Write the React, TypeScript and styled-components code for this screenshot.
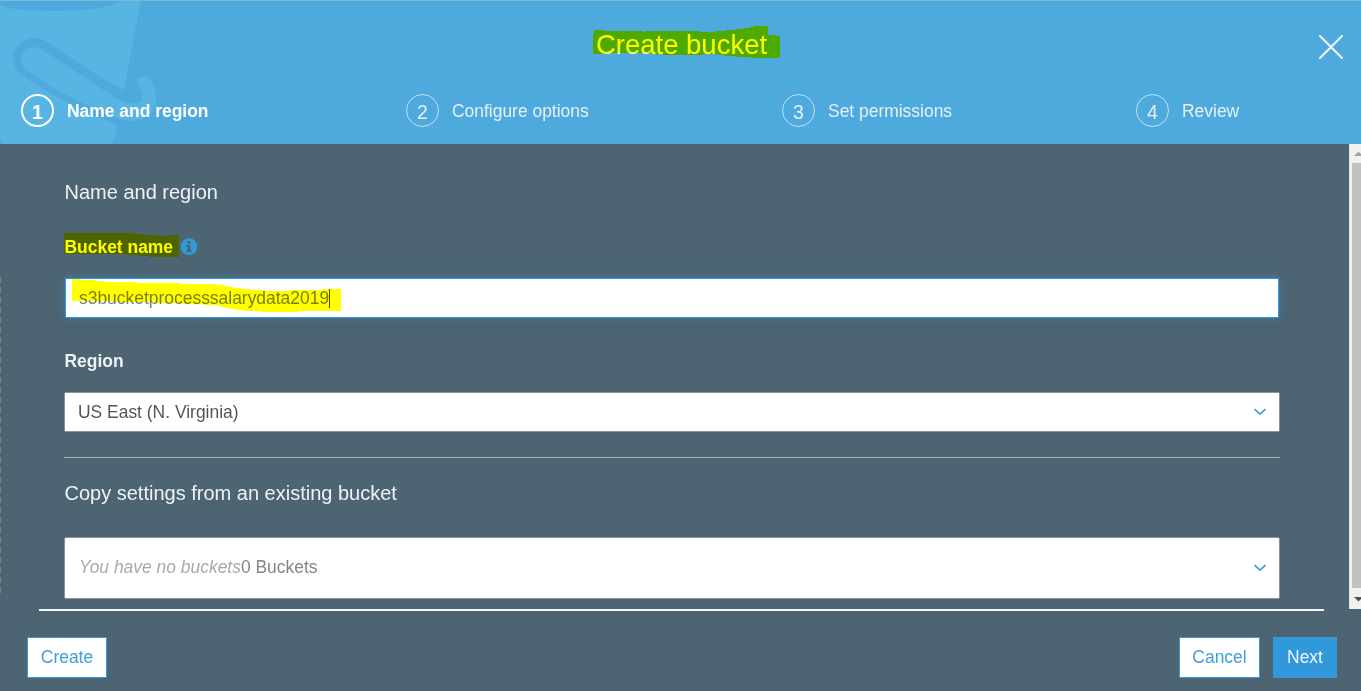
import React from 'react';
import styled, { createGlobalStyle, css } from 'styled-components';

const GlobalStyle = createGlobalStyle`
  *, *::before, *::after { box-sizing: border-box; }
  html, body { margin: 0; padding: 0; overflow: hidden; }
  body {
    font-family: "Liberation Sans", Arial, sans-serif;
    font-size: 17.45px;
    line-height: 20px;
    background: #4d6472;
  }
  button { font: inherit; cursor: pointer; }
`;

const Dialog = styled.div`
  position: relative;
  display: flex;
  flex-direction: column;
  width: 1361px;
  height: 691px;
  background: #4d6472;
  color: #eef2f4;
`;

const Header = styled.header`
  position: relative;
  display: flex;
  flex-direction: column;
  height: 144px;
  background: #4ea9dd;
  border-top: 1px solid #80b9d3;
  overflow: hidden;
`;

const BucketArt = styled.svg`
  position: absolute;
  left: 0;
  top: -1px;
`;

const TitleRow = styled.div`
  position: relative;
  display: grid;
  grid-template-columns: 60px 1fr 60px;
  align-items: center;
  height: 88px;
`;

const Title = styled.h1`
  grid-column: 2;
  margin: 0;
  padding-left: 2px;
  font-size: 27.5px;
  font-weight: 400;
  line-height: 32px;
  text-align: center;
  color: #fff;
`;

const CloseButton = styled.button`
  display: flex;
  padding: 3px 0 0 16.5px;
  border: 0;
  background: none;
`;

const Steps = styled.ol`
  position: relative;
  display: grid;
  grid-template-columns: 385px 376px 354px 1fr;
  margin: 0;
  padding: 5px 0 0 21px;
  list-style: none;
`;

const Step = styled.li<{ $active?: boolean }>`
  display: flex;
  align-items: center;
  gap: 13px;
  color: ${p => (p.$active ? '#fff' : '#e3f1fa')};
  font-weight: ${p => (p.$active ? 700 : 400)};
`;

const StepNumber = styled.span<{ $active?: boolean }>`
  display: flex;
  align-items: center;
  justify-content: center;
  width: 33px;
  height: 33px;
  border: ${p => (p.$active ? '2px solid #fff' : '1.5px solid #c4e1f3')};
  border-radius: 50%;
  font-size: 19.5px;
  padding-top: 2px;
`;

const StepName = styled.span`
  padding-top: 1px;
`;

const Main = styled.div`
  display: flex;
  height: 465px;
`;

const Form = styled.main`
  flex: 1;
  padding: 36px 69px 0 64px;
`;

const SectionTitle = styled.h2`
  margin: 0;
  padding-left: 0.5px;
  font-size: 20px;
  font-weight: 400;
  line-height: 24px;
`;

const Label = styled.label<{ $top: number; $height: number; $bright?: boolean }>`
  display: flex;
  align-items: flex-start;
  gap: 7px;
  margin-top: ${p => p.$top}px;
  padding-left: 0.5px;
  height: ${p => p.$height}px;
  font-weight: 700;
  ${p => p.$bright && css`color: #fff;`}
`;

const Field = styled.div<{ $height: number; $focused?: boolean }>`
  display: flex;
  align-items: center;
  justify-content: space-between;
  width: 1216px;
  height: ${p => p.$height}px;
  padding: 0 12px 0 13px;
  border: 1px solid #8c9499;
  border-radius: 2px;
  background: #fff;
  color: #555;
  ${p =>
    p.$focused &&
    css`
      width: 1214px;
      margin-left: 1px;
      border-color: #2f98da;
      border-radius: 1px;
      box-shadow: 0 0 7px rgba(50, 150, 220, 0.55);
      color: #7d7d7d;
    `}
`;

const FieldText = styled.span<{ $up?: number; $left?: number }>`
  display: flex;
  align-items: center;
  padding-bottom: ${p => p.$up ?? 0}px;
  padding-left: ${p => p.$left ?? 0}px;
`;

const Muted = styled.em`
  color: #a6aaaa;
`;

const Count = styled.span`
  color: #858585;
`;

const Caret = styled.span`
  width: 1px;
  height: 19px;
  background: #444;
`;

const Divider = styled.hr`
  width: 1216px;
  height: 1px;
  margin: 25px 0 23px;
  border: 0;
  background: #a9b4ba;
`;

const CopySection = styled.section`
  display: flex;
  flex-direction: column;
  gap: 32px;
`;

const Scrollbar = styled.div`
  display: flex;
  flex-direction: column;
  width: 12px;
  border-left: 1px solid #e2e4e5;
  background: #f1f1f1;
  overflow: hidden;
`;

const ScrollArrow = styled.svg`
  flex: none;
  display: block;
`;

const Thumb = styled.div`
  flex: 1;
  margin-left: 2px;
  background: #c1c1c1;
`;

const Footer = styled.footer`
  display: flex;
  flex-direction: column;
  height: 82px;
`;

const FooterRule = styled.div`
  height: 2px;
  margin: 0 37px 0 39px;
  background: #f5f8f9;
`;

const Actions = styled.div`
  display: flex;
  gap: 13px;
  padding: 26px 24px 0 27px;
`;

const Button = styled.button<{ $primary?: boolean; $width: number; $first?: boolean }>`
  width: ${p => p.$width}px;
  height: 41px;
  padding: 0 0 2px;
  border: 1px solid #3599d9;
  background: ${p => (p.$primary ? '#3199d9' : '#fff')};
  color: ${p => (p.$primary ? '#eef7fc' : '#3d9fdb')};
  margin-right: ${p => (p.$first ? 'auto' : '0')};
`;

const EdgeDashes = styled.div`
  position: absolute;
  left: 0;
  top: 277px;
  width: 1px;
  height: 316px;
  background: repeating-linear-gradient(to bottom, #86807a 0 6px, transparent 6px 10px);
`;

const Marker = styled.svg`
  position: absolute;
  left: 0;
  top: 0;
  pointer-events: none;
  mix-blend-mode: multiply;
`;

const Chevron = () => (
  <svg width="14" height="10" viewBox="0 0 14 10" fill="none">
    <path d="M1.5 2.2L7 7.1L12.5 2.2" stroke="#3d9fdb" strokeWidth="1.7" />
  </svg>
);

const InfoIcon = () => (
  <svg width="18" height="19" viewBox="0 -0.7 18 19">
    <circle cx="9" cy="9" r="8.4" fill="#3199d9" />
    <path d="M7.3 3.3h3v2.5h-3zM6.2 7.2h4.1v5h1.4v1.9H6.2v-1.9h1.3V9H6.2z" fill="#4d6472" />
  </svg>
);

const steps = ['Name and region', 'Configure options', 'Set permissions', 'Review'];

export default function App() {
  return (
    <>
      <GlobalStyle />
      <Dialog role="dialog" aria-label="Create bucket">
        <Header>
          <BucketArt width="240" height="144" viewBox="0 0 240 144" fill="none">
            <path d="M0 0H141L117 126Q115 140 110 144H3Q1 142 0 138Z" fill="#58b5e3" />
            <path d="M0 0H120C119 5 92 11 55 11C27 11 8 9 0 5Z" fill="#4ea9dd" />
            <path d="M118 125C85 113 50 95 23 76C12 68 11 55 17 46C25 37 38 36 47 42L126 94L122 102L43 50C36 45 28 46 23 53C19 60 22 67 28 71C52 88 78 102 104 112L120 116Z" fill="#4ea9dd" />
            <path d="M137 83Q138 77 145 76Q151 78 155 90Q159 103 151 113Q142 122 128 121Q116 119 98 110L108 93L122 101Q133 106 141 101Q145 94 137 83Z" fill="#58b5e3" />
            <path d="M104 84L126 97" stroke="#4ea9dd" strokeWidth="9" />
          </BucketArt>
          <TitleRow>
            <Title>Create bucket</Title>
            <CloseButton aria-label="Close">
              <svg width="26" height="26" viewBox="0 0 26 26">
                <path d="M2 2L24 24M24 2L2 24" stroke="#f2f9fd" strokeWidth="2.1" strokeLinecap="round" />
              </svg>
            </CloseButton>
          </TitleRow>
          <Steps>
            {steps.map((name, i) => (
              <Step key={name} $active={i === 0}>
                <StepNumber $active={i === 0}>{i + 1}</StepNumber>
                <StepName>{name}</StepName>
              </Step>
            ))}
          </Steps>
        </Header>
        <Main>
          <Form>
            <SectionTitle>Name and region</SectionTitle>
            <Label $top={33} $height={41} $bright>
              Bucket name
              <InfoIcon />
            </Label>
            <Field $height={40} $focused>
              <FieldText>
                s3bucketprocesssalarydata2019
                <Caret />
              </FieldText>
            </Field>
            <Label $top={33} $height={41}>Region</Label>
            <Field $height={40}>
              <FieldText $up={1}>US East (N. Virginia)</FieldText>
              <Chevron />
            </Field>
            <Divider />
            <CopySection>
              <SectionTitle>Copy settings from an existing bucket</SectionTitle>
              <Field $height={62}>
                <FieldText $up={2} $left={1}>
                  <Muted>You have no buckets</Muted>
                  <Count>0 Buckets</Count>
                </FieldText>
                <Chevron />
              </Field>
            </CopySection>
          </Form>
          <Scrollbar>
            <ScrollArrow width="12" height="19" viewBox="0 0 12 19">
              <path d="M4 12L8.5 7.5L13 12Z" fill="#a3a3a3" />
            </ScrollArrow>
            <Thumb />
            <ScrollArrow width="12" height="21" viewBox="0 0 12 21">
              <path d="M4 9H13L8.5 13.5Z" fill="#505050" />
            </ScrollArrow>
          </Scrollbar>
        </Main>
        <Footer>
          <FooterRule />
          <Actions>
            <Button $width={80} $first>Create</Button>
            <Button $width={81}>Cancel</Button>
            <Button $width={64} $primary>Next</Button>
          </Actions>
        </Footer>
        <EdgeDashes />
        <Marker width="1361" height="330" viewBox="0 0 1361 330" fill="#ff0" shapeRendering="crispEdges">
          <path d="M593 33H594V30H604V31H643V32H645V31H700V32H715V31H726V30H736V29H743V28H750V27H754V26H768V35H777V36H780V58H751V57H735V56H725V55H718V54H703V55H663V54H651V53H605V54H593Z" />
          <path d="M64 233H134V234H145V235H158V236H168V235H179V257H149V256H138V255H126V254H64Z" />
          <path d="M72 279H80V280H95V281H103V282H136V283H181V284H216V285H224V286H229V287H233V288H241V289H250V290H264V291H290V290H323V289H341V311H298V312H262V311H244V310H236V309H230V308H225V307H221V306H218V305H203V304H181V303H155V302H115V301H72Z" />
        </Marker>
      </Dialog>
    </>
  );
}
